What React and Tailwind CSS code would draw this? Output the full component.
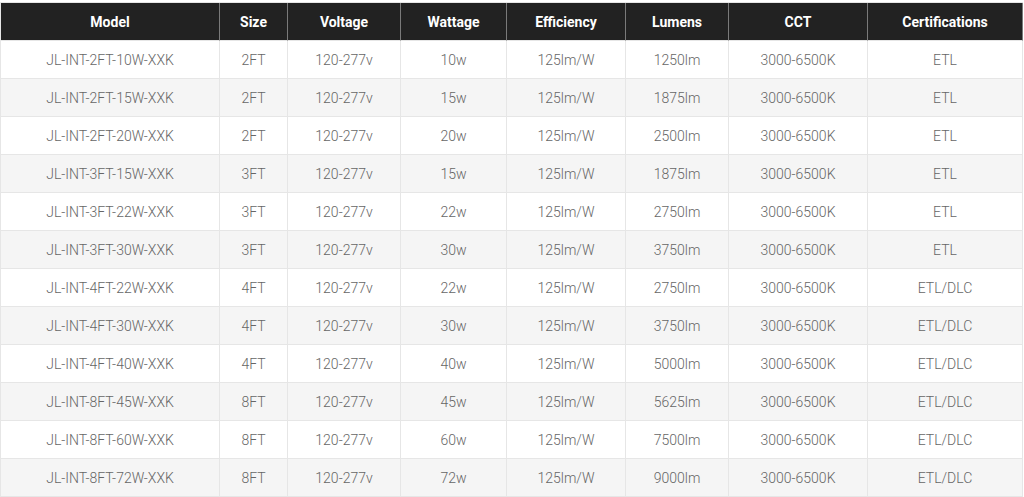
import React from 'react';

const columns = [
  { key: 'model', label: 'Model' },
  { key: 'size', label: 'Size' },
  { key: 'voltage', label: 'Voltage' },
  { key: 'wattage', label: 'Wattage' },
  { key: 'efficiency', label: 'Efficiency' },
  { key: 'lumens', label: 'Lumens' },
  { key: 'cct', label: 'CCT' },
  { key: 'cert', label: 'Certifications' },
];

const row = (len, watts, lumens, cert) => ({
  model: `JL-INT-${len}-${watts}W-XXK`,
  size: len,
  voltage: '120-277v',
  wattage: `${watts}w`,
  efficiency: '125lm/W',
  lumens: `${lumens}lm`,
  cct: '3000-6500K',
  cert,
});

const rows = [
  row('2FT', 10, 1250, 'ETL'),
  row('2FT', 15, 1875, 'ETL'),
  row('2FT', 20, 2500, 'ETL'),
  row('3FT', 15, 1875, 'ETL'),
  row('3FT', 22, 2750, 'ETL'),
  row('3FT', 30, 3750, 'ETL'),
  row('4FT', 22, 2750, 'ETL/DLC'),
  row('4FT', 30, 3750, 'ETL/DLC'),
  row('4FT', 40, 5000, 'ETL/DLC'),
  row('8FT', 45, 5625, 'ETL/DLC'),
  row('8FT', 60, 7500, 'ETL/DLC'),
  row('8FT', 72, 9000, 'ETL/DLC'),
];

export default function App() {
  return (
    <div className="bg-white w-[1024px] h-[497px] pt-[2px] font-['Roboto',sans-serif] overflow-hidden">
      {/* spec table */}
      <div className="grid grid-cols-[219px_68px_113px_106px_119px_103px_139px_155px] w-[1023px] border-l border-t border-[#e6e6e6]">
        {columns.map((col) => (
          <div
            key={col.key}
            className="h-[38px] pt-px flex items-center justify-center bg-[#222222] text-white font-bold text-[14px] border-r border-r-[#7a7a7a] border-b border-b-[#e6e6e6] last:border-r-[#e6e6e6]"
          >
            {col.label}
          </div>
        ))}
        {rows.map((r, i) =>
          columns.map((col) => (
            <div
              key={`${i}-${col.key}`}
              className={`h-[38px] pt-px flex items-center justify-center text-[14px] font-light text-[#666666] border-r border-b border-[#e6e6e6] ${
                i % 2 === 1 ? 'bg-[#f5f5f5]' : 'bg-white'
              }`}
            >
              {r[col.key]}
            </div>
          ))
        )}
      </div>
    </div>
  );
}
